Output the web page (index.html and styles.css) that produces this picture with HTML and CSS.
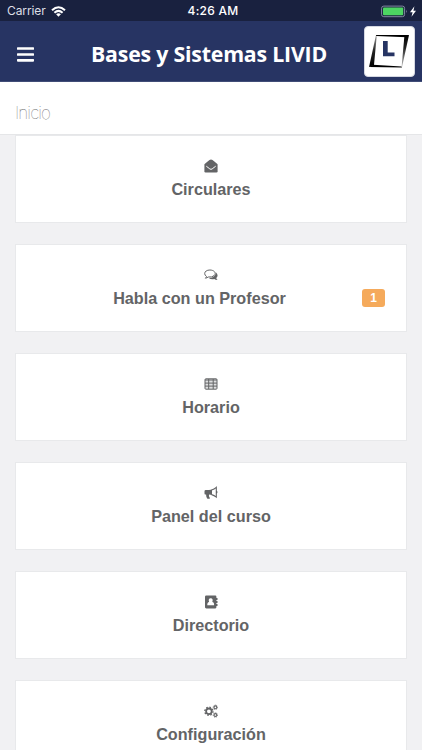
FILE: index.html
```html
<!DOCTYPE html>
<html lang="es">
<head>
<meta charset="utf-8">
<title>Bases y Sistemas LIVID</title>
<link rel="stylesheet" href="styles.css">
</head>
<body>
<div class="status">
  <div class="carrier"><span>Carrier</span>
    <svg width="15" height="11" viewBox="0 0 15 11"><g fill="none" stroke="#fff" stroke-width="2"><path d="M1 4.3Q7.5-1.9 14 4.3M3.4 6.8Q7.5 3 11.6 6.8"/></g><path fill="#fff" d="M5.1 8.3Q7.5 6.3 9.9 8.3L7.5 10.8Z"/></svg>
  </div>
  <div class="time">4:26 AM</div>
  <svg class="battery" width="37" height="13" viewBox="0 0 37 13"><rect x=".6" y="1.1" width="23" height="10.6" rx="2.2" fill="none" stroke="#8289a0"/><rect x="2" y="2.5" width="20.2" height="7.8" rx="1" fill="#4cd562"/><path d="M25 4.7q1.6 1.7 0 3.4z" fill="#8289a0"/><path d="M33.4 1.2 29 7.2h2.6l-1.1 4.5 4.5-6h-2.6z" fill="#fff"/></svg>
</div>
<header class="bar">
  <svg class="menu" width="17" height="15" viewBox="0 0 17 15"><path d="M1 1.5h15M1 7.5h15M1 13.3h15" stroke="#fff" stroke-width="2.7" stroke-linecap="round"/></svg>
  <h1>Bases y Sistemas LIVID</h1>
  <div class="logo">
    <svg width="42" height="36" viewBox="0 0 42 36"><defs><linearGradient id="right" x1="0" y1="0" x2="0" y2="1"><stop offset="0"/><stop offset=".4" stop-color="#222"/><stop offset="1" stop-color="#bbb"/></linearGradient><linearGradient id="left" x1="0" y1="1" x2="0" y2="0"><stop offset="0"/><stop offset=".5" stop-color="#222"/><stop offset="1" stop-color="#999"/></linearGradient></defs><path d="M8 2H41L39 4.3 8 2.9Z"/><path d="M41 2 34 34 33.7 33 36.3 4Z" fill="url(#right)"/><path d="M8 2 1 34 6 32 8.6 4Z" fill="url(#left)"/><path d="M1 34 34 34.5 33.5 33.5 5 31.7Z"/><path d="M15 8h4.7v11.4h6.8v3.8H15z" fill="#263463"/></svg>
  </div>
</header>
<div class="crumb">Inicio</div>
<main>
  <section class="card"><svg class="icon" viewBox="0 0 14 14"><path fill="#636466" d="M.4 5.2Q3 3 5.5 1.1Q7 .1 8.5 1.1Q11 3 13.6 5.2V12.2Q13.6 13.4 12.4 13.4H1.6Q.4 13.4.4 12.2Z"/><path d="M2.3 7.2 5.8 9.9Q7 10.8 8.2 9.9L11.7 7.2" fill="none" stroke="#fff" stroke-width="1"/></svg><span>Circulares</span></section>
  <section class="card"><svg class="icon" viewBox="0 0 14 14"><path fill="#636466" d="M12 4.5Q15 7.4 12.3 9.9Q12.5 11.4 13.7 12Q11.8 12.2 10.2 11.1Q7 11.8 4.8 10.1Q11.3 9.8 12 4.5Z"/><path fill="#fff" stroke="#636466" stroke-width="1" d="M5.9 2C2.8 2 .7 3.5.7 5.6Q.7 7.3 2.5 8.4Q2.2 9.4 1.4 10.2Q3.1 9.9 4.2 9Q8.1 9.5 10.1 7.6C13 4.9 9.8 2 5.9 2Z"/></svg><span class="with-badge">Habla con un Profesor</span><b class="badge">1</b></section>
  <section class="card"><svg class="icon" viewBox="0 0 14 14"><rect x="1" y="1.8" width="12" height="10.4" rx=".9" fill="#dedfe0" stroke="#636466"/><path fill="none" stroke="#636466" stroke-width="1" d="M1 3h12M1 6.1h12M1 9.1h12M4.7 2v10M9.2 2v10"/></svg><span>Horario</span></section>
  <section class="card"><svg class="icon" viewBox="0 0 14 14"><path fill="#636466" d="M8 3.6V9Q6.3 8.6 5 8.6Q4.4 10.5 6 12.2Q5.2 13.3 3.1 12.6Q2 10.5 2.1 8.6Q.5 8.7.5 7.4V5.3Q.5 4 1.8 4H5Q6.7 4 8 3.6Z"/><path fill="none" stroke="#636466" stroke-width="1.1" d="M7.6 4Q10.2 3.2 12.3 1.3V11.1Q10.2 9.3 7.6 8.6M12.3 5q1.2 1.2 0 2.4"/></svg><span>Panel del curso</span></section>
  <section class="card"><svg class="icon" viewBox="0 0 14 14"><path fill="#636466" d="M2.3.6h9Q12.4.6 12.4 1.7V3h1.1v2h-1.1v1h1.1v2h-1.1v1h1.1v2h-1.1v1.3q0 1.1-1.1 1.1h-9Q1 13.4 1 12.3V1.7Q1 .6 2.3.6Z"/><path fill="#fff" d="M3.3 10.3Q3.1 7.2 5.1 7Q3.9 3.5 6.7 3.3Q9.5 3.5 8.3 7Q10.3 7.2 10.1 10.3Z"/></svg><span>Directorio</span></section>
  <section class="card"><svg class="icon" viewBox="0 0 14 14"><g fill="none" stroke="#636466"><circle cx="4.9" cy="7.3" r="2.8" stroke-width="1.8"/><circle cx="4.9" cy="7.3" r="4.1" stroke-width="1.3" stroke-dasharray="1.6 1.62"/><circle cx="11.4" cy="3.3" r="1.4" stroke-width="1.1"/><circle cx="11.4" cy="3.3" r="2.2" stroke-width=".8" stroke-dasharray="1 .73"/><circle cx="11.4" cy="11" r="1.4" stroke-width="1.1"/><circle cx="11.4" cy="11" r="2.2" stroke-width=".8" stroke-dasharray="1 .73"/></g></svg><span>Configuración</span></section>
</main>
</body>
</html>
```
FILE: styles.css
```css
* { box-sizing: border-box; }
body { margin: 0; height: 750px; overflow: hidden; background: #f1f1f3; font-family: "Liberation Sans", Arial, sans-serif; color: #636466; }
svg { display: block; flex: none; }
.status { height: 21px; background: #19213f; color: #fff; display: grid; grid-template-columns: 1fr auto 1fr; align-items: center; padding: 1px 4px 0 7px; font: 12px/20px Inter, sans-serif; }
.carrier { display: flex; align-items: center; gap: 5px; color: #dddfe6; letter-spacing: -.1px; }
.time { font-weight: 500; letter-spacing: .25px; padding-left: 1px; }
.battery { justify-self: end; }
.bar { height: 61px; background: #273463; display: flex; align-items: center; padding: 0 7px 0 17px; border-bottom: 1px solid #414d77; }
.menu { margin-top: 7px; }
h1 { margin: 5px 0 0 57px; width: 236px; font: 700 21.3px/30px "Trebuchet MS", "Open Sans", sans-serif; letter-spacing: -.2px; color: #fff; white-space: nowrap; }
.logo { width: 51px; height: 51px; margin-left: auto; border: 1px solid #d5d8e2; border-radius: 4px; background: #fff; display: flex; align-items: center; justify-content: center; padding-right: 2px; }
.crumb { height: 53px; background: #fff; border-bottom: 1px solid #e5e6e8; padding: 20px 15px 0; font: 100 17px/22px Inter, sans-serif; letter-spacing: -.9px; color: #66676a; }
main { padding: 0 15px; display: flex; flex-direction: column; gap: 21px; }
.card { position: relative; height: 88px; flex: none; background: #fff; border: 1px solid #e8e9eb; display: flex; flex-direction: column; align-items: center; padding-top: 23px; font-weight: 700; font-size: 16.2px; line-height: 20px; }
.icon { width: 14px; height: 14px; margin-bottom: 6px; }
.with-badge { padding-right: 23px; }
.badge { position: absolute; right: 21px; top: 44px; width: 23px; height: 18px; border-radius: 3px; background: #f5aa5b; color: #fff; font-size: 12px; line-height: 18px; text-align: center; }
```
